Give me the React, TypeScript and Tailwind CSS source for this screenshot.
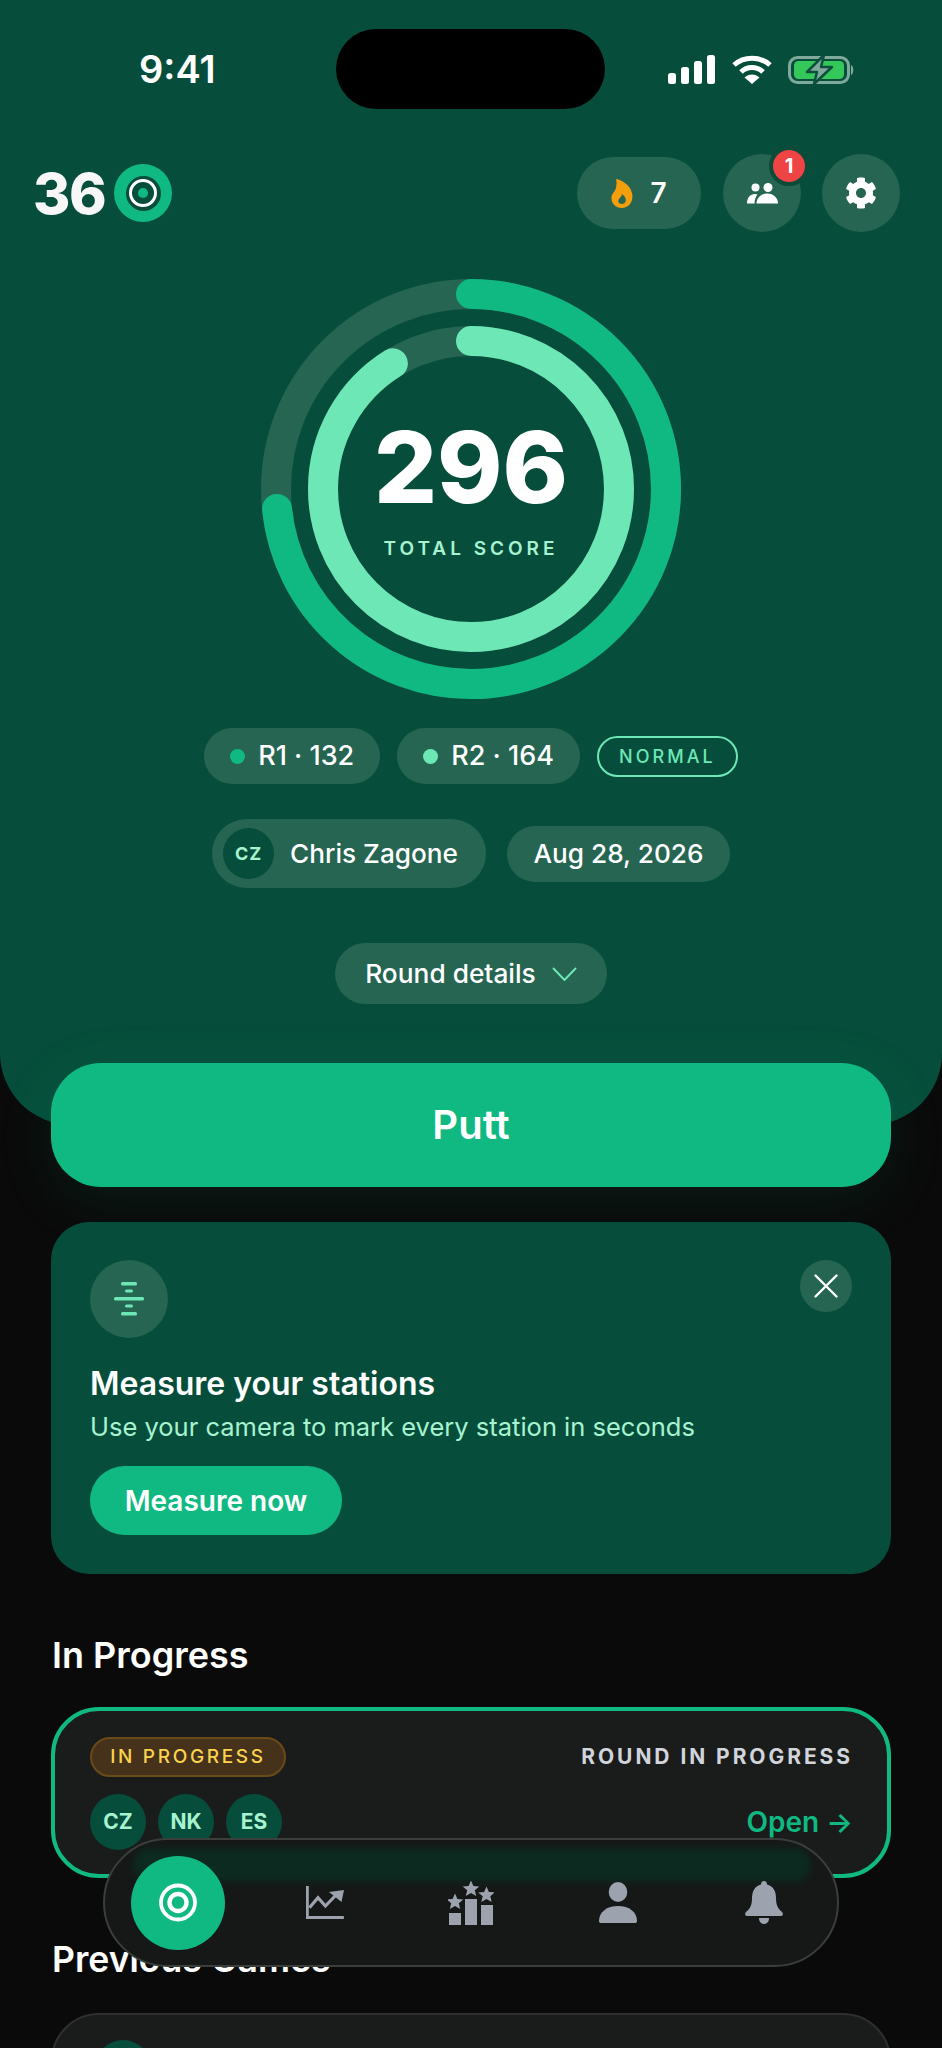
import React from "react";
import { FaCog } from "react-icons/fa";

const CIRC_OUT = 2 * Math.PI * 195;
const CIRC_IN = 2 * Math.PI * 148;

function Rings() {
  return (
    <svg width="422" height="422" viewBox="0 0 422 422" className="block">
      <g fill="none" strokeWidth="30" transform="rotate(-90 211 211)">
        <circle cx="211" cy="211" r="195" stroke="#256552" />
        <circle cx="211" cy="211" r="148" stroke="#256552" />
        <circle cx="211" cy="211" r="195" stroke="#10b981" strokeLinecap="round" strokeDasharray={`${CIRC_OUT * (132 / 180)} ${CIRC_OUT}`} />
        <circle cx="211" cy="211" r="148" stroke="#6ee7b7" strokeLinecap="round" strokeDasharray={`${CIRC_IN * (164 / 180)} ${CIRC_IN}`} />
      </g>
    </svg>
  );
}

function Signal() {
  return (
    <svg width="47" height="29" viewBox="0 0 47 29" fill="#fff">
      <rect x="0" y="18" width="8" height="11" rx="2.5" />
      <rect x="13" y="12" width="8" height="17" rx="2.5" />
      <rect x="26" y="6" width="8" height="23" rx="2.5" />
      <rect x="39" y="0" width="8" height="29" rx="2.5" />
    </svg>
  );
}

function Wifi() {
  return (
    <svg width="40" height="29" viewBox="0 0 40 29" fill="none" stroke="#fff" strokeWidth="5">
      <path d="M2 10 C12 1 28 1 38 10" />
      <path d="M9 17 C15 11 25 11 31 17" />
      <path d="M20 29 L12.5 22.5 C17 18.5 23 18.5 27.5 22.5 Z" fill="#fff" stroke="none" />
    </svg>
  );
}

function Battery() {
  return (
    <svg width="67" height="31" viewBox="0 0 67 31" fill="none">
      <rect x="1.5" y="3.5" width="59" height="25" rx="8" stroke="#7fa99b" strokeWidth="3" />
      <rect x="6" y="7" width="50" height="18" rx="4.5" fill="#34c759" />
      <path d="M63 11 C66 12 66 20 63 21 Z" fill="#7fa99b" />
      <path d="M36 1 L19 18 H29 L26 30 L44 13 H33 Z" fill="#7fa99b" stroke="#0b4f3c" strokeWidth="2.5" strokeLinejoin="round" />
    </svg>
  );
}

function Flame() {
  return (
    <svg width="22" height="29" viewBox="0 0 22 29" fill="#f59e0b">
      <path
        fillRule="evenodd"
        d="M5 0 C11 1 19 6 21 14 C23 22 18 29 11 29 C4 29 0 24 0.5 18 C1 14 4 13 5 9 C5.5 6 6 3 5 0 Z M11 25 C8 25 7 23 7.5 21 C8 19 10.5 18.5 11 15 C13.5 17 15 19 14.8 21.5 C14.6 23.5 13 25 11 25 Z"
      />
    </svg>
  );
}

function Friends() {
  return (
    <svg width="31" height="21" viewBox="0 0 31 21" fill="#fff">
      <circle cx="8.5" cy="4.5" r="4" />
      <circle cx="21" cy="4.5" r="4.5" />
      <path d="M0 20.5 C0 15 3 11 8 11 C9 11 10 11.2 10.5 11.5 C8.5 14 7.5 17 7.5 20.5 Z" />
      <path d="M9.5 20.5 C9.5 14.5 14.5 10.5 20.5 10.5 C26.5 10.5 31 15 31 20.5 Z" />
    </svg>
  );
}

function Bars() {
  return (
    <svg width="30" height="34" viewBox="0 0 30 34" fill="#6ee7b7">
      <rect x="7" y="0" width="16" height="3.4" rx="1.5" />
      <rect x="11" y="7.5" width="8" height="3" rx="1.5" />
      <rect x="0" y="15" width="30" height="3.4" rx="1.5" />
      <rect x="11" y="22.5" width="8" height="3" rx="1.5" />
      <rect x="7" y="30" width="16" height="3.4" rx="1.5" />
    </svg>
  );
}

function Target() {
  return (
    <svg width="38" height="39" viewBox="0 0 38 39" fill="none" stroke="#fff">
      <circle cx="19" cy="19.5" r="17" strokeWidth="3.8" />
      <circle cx="19" cy="19.5" r="8.5" strokeWidth="4.4" />
    </svg>
  );
}

function ChartIcon() {
  return (
    <svg width="38" height="33" viewBox="0 0 38 33" fill="#9ca3af">
      <rect x="0" y="0" width="2.8" height="33" />
      <rect x="0" y="30" width="38" height="3" rx="1" />
      <polyline points="3.4,21.7 12,11.7 19.4,20 31,8" fill="none" stroke="#9ca3af" strokeWidth="3.2" />
      <path d="M38 4 L23 6 L35.5 16 Z" />
    </svg>
  );
}

function Podium() {
  const star = "M0 -8.5 L2.4 -3 L8.3 -2.6 L3.8 1.3 L5.2 7 L0 4 L-5.2 7 L-3.8 1.3 L-8.3 -2.6 L-2.4 -3 Z";
  return (
    <svg width="46" height="44" viewBox="0 0 46 44" fill="#9ca3af">
      <rect x="1" y="32" width="12" height="12" />
      <rect x="17" y="18" width="12" height="26" />
      <rect x="33" y="24" width="12" height="20" />
      <path transform="translate(7 21)" d={star} />
      <path transform="translate(23 8)" d={star} />
      <path transform="translate(38.5 14)" d={star} />
    </svg>
  );
}

function Person() {
  return (
    <svg width="38" height="41" viewBox="0 0 38 41" fill="#9ca3af">
      <ellipse cx="19" cy="10" rx="9.3" ry="10" />
      <path d="M0 39 C0 30 8 24 19 24 C30 24 38 30 38 39 C38 40.5 37 41 36 41 H2 C1 41 0 40.5 0 39 Z" />
    </svg>
  );
}

function Bell() {
  return (
    <svg width="38" height="43" viewBox="0 0 38 43" fill="#9ca3af">
      <path d="M19 0 C21 0 22 1.5 22 3.5 C28 5 31 10 31 17 C31 24 33 28 37 31 C38.5 32.5 38 35 36 35 H2 C0 35 -0.5 32.5 1 31 C5 28 7 24 7 17 C7 10 10 5 16 3.5 C16 1.5 17 0 19 0 Z" />
      <path d="M14 37 H24 C24 40.5 22 43 19 43 C16 43 14 40.5 14 37 Z" />
    </svg>
  );
}

function Avatar({ t }: { t: string }) {
  return (
    <div className="flex h-[56px] w-[56px] items-center justify-center rounded-full bg-[#064e3b] text-[21px] font-bold text-[#a7f3d0]">
      {t}
    </div>
  );
}

function Chip({ color, text }: { color: string; text: string }) {
  return (
    <div className="flex h-[56px] items-center rounded-full bg-[#256552] px-[26px] text-[27px] font-medium text-white">
      <span className={`mr-[13px] h-[15px] w-[15px] rounded-full ${color}`} />
      {text}
    </div>
  );
}

export default function App() {
  return (
    <div className="relative h-[2048px] w-full overflow-hidden bg-[#0a0a0a] font-['Inter',sans-serif] text-white">
      <section className="flex h-[1125px] flex-col rounded-b-[72px] bg-[#064e3b] pt-[29px]">
        <div className="flex h-[80px] items-center">
          <div className="w-[336px] pl-[139px] text-[38px] font-semibold leading-none">9:41</div>
          <div className="h-[80px] w-[269px] rounded-full bg-black" />
          <div className="ml-[63px] flex items-center">
            <Signal />
            <div className="ml-[17px]"><Wifi /></div>
            <div className="ml-[16px]"><Battery /></div>
          </div>
        </div>

        <header className="mt-[45px] flex h-[78px] items-center justify-between pl-[33px] pr-[42px]">
          <div className="flex items-center gap-[9px]">
            <span className="text-[57px] font-extrabold leading-none tracking-[-1.5px] text-[#f7f7f7]">36</span>
            <div className="flex h-[58px] w-[58px] items-center justify-center rounded-full bg-[#10b981]">
              <div className="flex h-[35px] w-[35px] items-center justify-center rounded-full bg-[#064e3b]">
                <div className="flex h-[28px] w-[28px] items-center justify-center rounded-full border-[3px] border-white">
                  <div className="h-[10px] w-[10px] rounded-full bg-[#10b981]" />
                </div>
              </div>
            </div>
          </div>
          <div className="flex items-center">
            <div className="flex h-[72px] w-[124px] items-center justify-center gap-[17px] rounded-full bg-[#256552] text-[28px] font-semibold">
              <Flame />
              <span>7</span>
            </div>
            <div className="relative ml-[22px] flex h-[78px] w-[78px] items-center justify-center rounded-full bg-[#256552]">
              <Friends />
              <div className="absolute right-[-8px] top-[-8px] flex h-[40px] w-[40px] items-center justify-center rounded-full border-[4px] border-[#0c4a3a] bg-[#ef4444] text-[20px] font-bold">1</div>
            </div>
            <div className="ml-[21px] flex h-[78px] w-[78px] items-center justify-center rounded-full bg-[#256552]">
              <FaCog size={32} color="#fff" />
            </div>
          </div>
        </header>

        <div className="relative mx-auto mt-[46px] h-[422px] w-[422px]">
          <Rings />
          <div className="absolute inset-0 flex flex-col items-center">
            <div className="mt-[137px] text-[99px] font-extrabold leading-[104px] text-white">296</div>
            <div className="mt-[18px] text-[19px] font-semibold leading-[24px] tracking-[0.21em] text-[#a7f3d0]">TOTAL SCORE</div>
          </div>
        </div>

        <div className="mt-[28px] flex items-center justify-center gap-[17px]">
          <Chip color="bg-[#10b981]" text="R1 · 132" />
          <Chip color="bg-[#6ee7b7]" text="R2 · 164" />
          <div className="flex h-[41px] w-[141px] items-center justify-center rounded-full border-[2.5px] border-[#6ee7b7] text-[18px] font-medium tracking-[0.17em] text-[#6ee7b7]">NORMAL</div>
        </div>

        <div className="mt-[35px] flex items-center justify-center gap-[21px]">
          <div className="flex h-[69px] w-[274px] items-center gap-[16px] rounded-full bg-[#256552] pl-[11px] text-[26.2px] font-medium">
            <div className="flex h-[51px] w-[51px] items-center justify-center rounded-full bg-[#064e3b] text-[18px] font-bold tracking-[0.05em] text-[#a7f3d0]">CZ</div>
            Chris Zagone
          </div>
          <div className="flex h-[56px] w-[223px] items-center justify-center rounded-full bg-[#256552] text-[26.2px] font-medium">Aug 28, 2026</div>
        </div>

        <div className="mx-auto mt-[55px] flex h-[61px] w-[272px] items-center justify-center gap-[16px] rounded-full bg-[#256552] text-[26.3px] font-medium">
          Round details
          <svg width="25" height="14" viewBox="0 0 25 14" fill="none" stroke="#6ee7b7" strokeWidth="2">
            <path d="M1 1 L12.5 13 L24 1" />
          </svg>
        </div>
      </section>

      <main className="relative px-[51px]">
        <button className="-mt-[62px] flex h-[124px] w-full items-center justify-center rounded-[50px] bg-[#10b981] text-[40px] font-semibold text-white shadow-[0_14px_60px_rgba(16,185,129,0.1)]">
          Putt
        </button>

        <div className="relative mt-[35px] h-[352px] rounded-[38px] bg-[#064e3b] px-[39px] pt-[38px]">
          <div className="flex h-[78px] w-[78px] items-center justify-center rounded-full bg-[#256552]"><Bars /></div>
          <button className="absolute right-[39px] top-[38px] flex h-[52px] w-[52px] items-center justify-center rounded-full bg-[#256552]">
            <svg width="24" height="24" viewBox="0 0 24 24" stroke="#fff" strokeWidth="2.4" strokeLinecap="round">
              <path d="M1.5 1.5 L22.5 22.5 M22.5 1.5 L1.5 22.5" />
            </svg>
          </button>
          <h2 className="mt-[27px] text-[32px] font-semibold leading-[38px]">Measure your stations</h2>
          <p className="mt-[8px] text-[25.5px] leading-[32px] text-[#a7f3d0]">Use your camera to mark every station in seconds</p>
          <button className="mt-[23px] h-[69px] w-[252px] rounded-full bg-[#10b981] text-[28px] font-semibold">Measure now</button>
        </div>

        <h2 className="ml-px mt-[59px] text-[36px] font-semibold leading-[44px]">In Progress</h2>
        <div className="mt-[30px] h-[171px] rounded-[48px] border-[4px] border-[#10b981] bg-[#1a1c1b] pl-[35px] pr-[34px] pt-[26px]">
          <div className="flex items-center justify-between">
            <div className="flex h-[40px] w-[196px] items-center justify-center rounded-full border-2 border-[#6b4a1a] bg-[#46321a] text-[19px] font-medium tracking-[0.14em] text-[#fcd34d]">IN PROGRESS</div>
            <div className="text-[21px] font-bold tracking-[0.14em] text-[#d1d5db]">ROUND IN PROGRESS</div>
          </div>
          <div className="mt-[17px] flex items-center justify-between">
            <div className="flex gap-[12px]">
              <Avatar t="CZ" />
              <Avatar t="NK" />
              <Avatar t="ES" />
            </div>
            <div className="text-[28px] font-semibold text-[#10b981]">Open →</div>
          </div>
        </div>

        <h2 className="ml-px mt-[60px] text-[35.6px] font-semibold leading-[44px]">Previous Games</h2>
        <div className="mt-[31px] h-[300px] rounded-[48px] border-2 border-[#2d302e] bg-[#1a1c1b] px-[42px] pt-[25px]">
          <div className="h-[56px] w-[56px] rounded-full bg-[#064e3b]" />
        </div>
      </main>

      <nav className="absolute left-[103px] top-[1838px] grid h-[129px] w-[736px] grid-cols-[repeat(5,146.5px)] items-center overflow-hidden rounded-full border-2 border-[#3a3f3b] bg-[#161817]">
        <div className="absolute left-[28px] right-[26px] top-[8px] h-[34px] rounded-full bg-[#0c2a1f] blur-[3px]" />
        <div className="relative flex justify-center">
          <div className="flex h-[94px] w-[94px] items-center justify-center rounded-full bg-[#10b981]"><Target /></div>
        </div>
        <div className="relative flex justify-center"><ChartIcon /></div>
        <div className="relative flex justify-center"><Podium /></div>
        <div className="relative flex justify-center"><Person /></div>
        <div className="relative flex justify-center"><Bell /></div>
      </nav>
    </div>
  );
}
